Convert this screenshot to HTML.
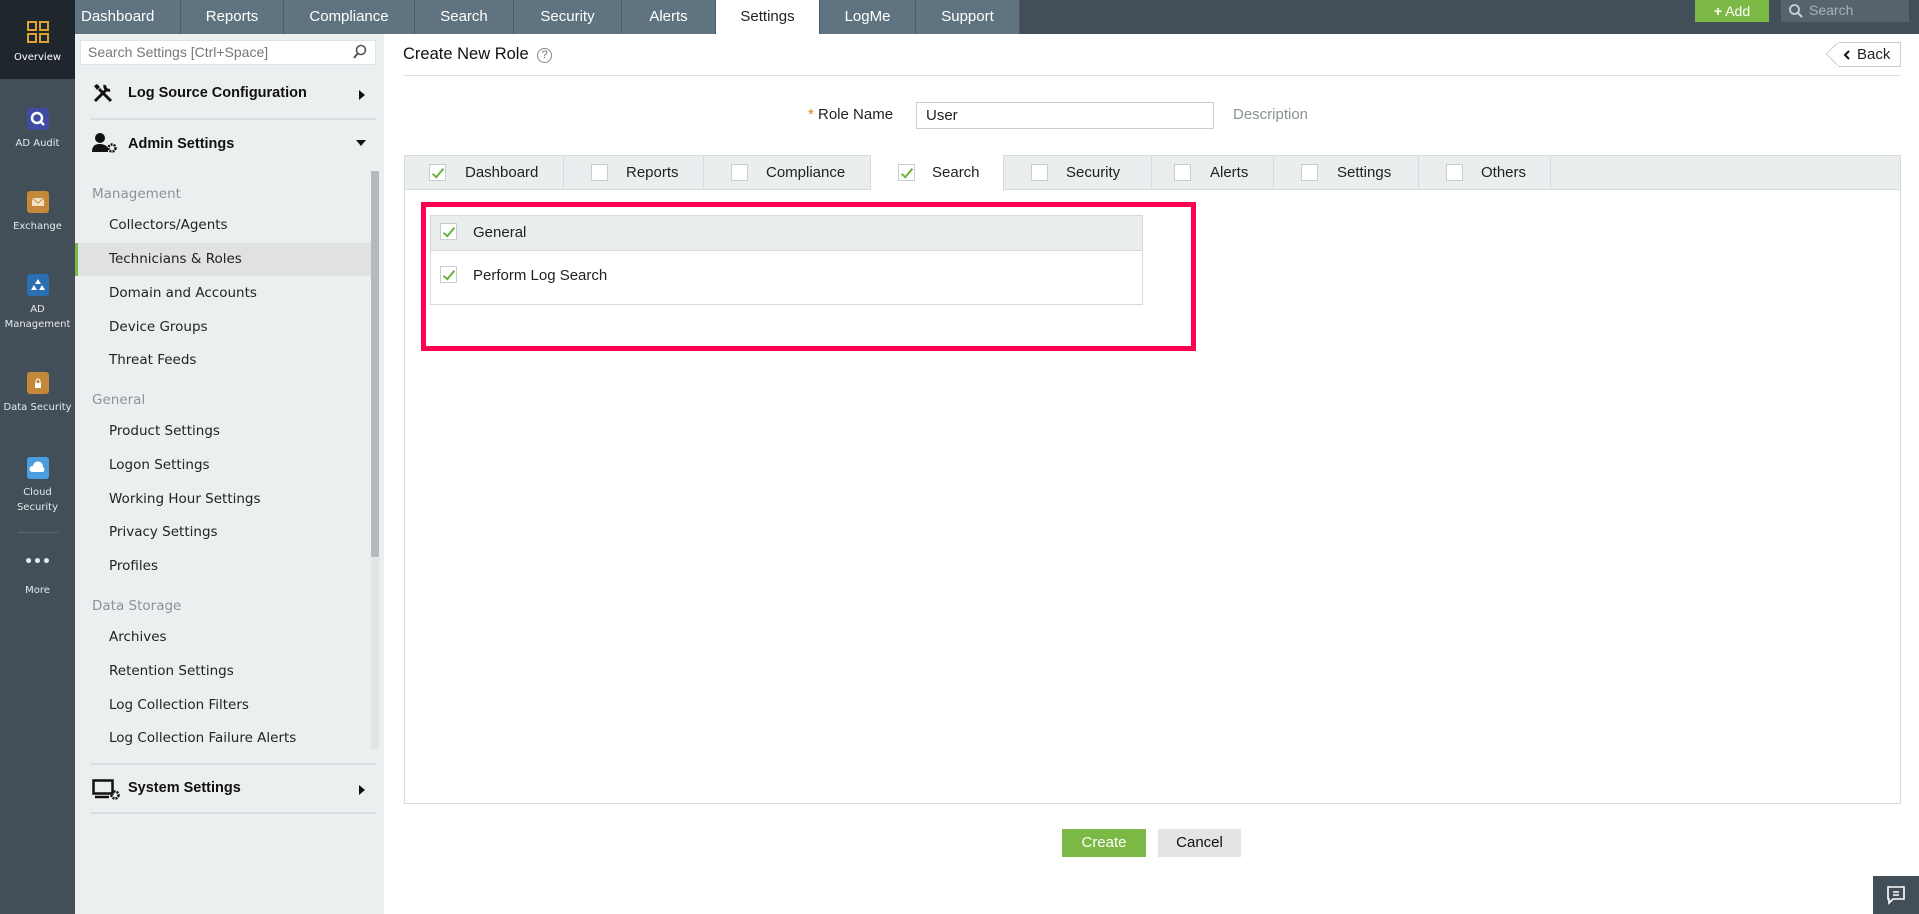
<!DOCTYPE html>
<html><head><meta charset="utf-8"><style>
*{box-sizing:border-box;margin:0;padding:0}
body{width:1919px;height:914px;overflow:hidden;background:#fff;font-family:"Liberation Sans",sans-serif;position:relative;color:#222}
.abs{position:absolute}
#top{left:75px;top:0;width:1844px;height:34px;background:#434f58}
.tab{position:absolute;top:0;height:34px;background:#5f7480;color:#fff;font-size:15px;line-height:33px;text-align:center;border-right:1px solid #4d5d67}
.tab.on{background:#fff;color:#222}
#rail{left:0;top:0;width:75px;height:914px;background:#434f58}
.ri{position:absolute;left:0;width:75px;text-align:center;color:#e6e9eb;font-family:"DejaVu Sans",sans-serif;font-size:10px;line-height:15px}
.ic{width:22px;height:22px;border-radius:3px;margin:0 auto 6px;position:relative}
#side{left:75px;top:34px;width:309px;height:880px;background:#eceff0}
.si{position:absolute;left:109px;font-family:"DejaVu Sans",sans-serif;font-size:13.5px;color:#222}
.sh{position:absolute;left:92px;font-family:"DejaVu Sans",sans-serif;font-size:13.5px;color:#8b9296}
.bh{position:absolute;left:128px;font-size:14.5px;font-weight:bold;color:#111}
.hr{position:absolute;left:91px;width:285px;height:2px;background:#d9dddf}
.ctab{position:absolute;top:155px;height:35px;border-right:1px solid #d6dadc;font-size:15px;line-height:35px;color:#222}
.cb{position:absolute;top:9px;width:17px;height:17px;border:1px solid #c8cdd0;background:#fff}
.cb.k::after{content:"";position:absolute;left:5px;top:1px;width:4px;height:10px;border:solid #6cb33f;border-width:0 2px 2px 0;transform:rotate(40deg)}
</style></head><body>
<div id="rail" class="abs">
 <div class="abs" style="left:0;top:0;width:75px;height:79px;background:#1f262d"></div>
 <div class="ri" style="top:20px;color:#fff"><svg width="24" height="24" viewBox="0 0 24 24" style="display:block;margin:0 auto 6px"><g fill="none" stroke="#e0a22e" stroke-width="2"><rect x="2" y="2" width="8" height="8"/><rect x="14" y="2" width="8" height="8"/><rect x="2" y="14" width="8" height="8"/><rect x="14" y="14" width="8" height="8"/></g></svg>Overview</div>
 <div class="ri" style="top:108px"><div class="ic" style="background:#3f4aa3"><svg width="22" height="22" viewBox="0 0 22 22"><circle cx="10" cy="10" r="5" fill="none" stroke="#fff" stroke-width="2.5"/><path d="M13 13l4 4" stroke="#fff" stroke-width="2.5"/></svg></div>AD Audit</div>
 <div class="ri" style="top:191px"><div class="ic" style="background:#c4883a"><svg width="22" height="22" viewBox="0 0 22 22"><rect x="5" y="7" width="12" height="8" fill="#f4e2c8"/><path d="M5 7l6 5 6-5" stroke="#c4883a" fill="none"/></svg></div>Exchange</div>
 <div class="ri" style="top:274px"><div class="ic" style="background:#2b6fb3"><svg width="22" height="22" viewBox="0 0 22 22"><path d="M11 5l3 5H8zM7 11l3 5H4zM15 11l3 5h-6z" fill="#fff"/></svg></div>AD<br>Management</div>
 <div class="ri" style="top:372px"><div class="ic" style="background:#c4883a"><svg width="22" height="22" viewBox="0 0 22 22"><rect x="8" y="11" width="6" height="5" fill="#fff"/><path d="M9 11V9a2 2 0 0 1 4 0v2" stroke="#fff" fill="none"/></svg></div>Data Security</div>
 <div class="ri" style="top:457px"><div class="ic" style="background:#4a9ee0"><svg width="22" height="22" viewBox="0 0 22 22"><path d="M5 15a3 3 0 0 1 1-6 5 5 0 0 1 10 1 3 3 0 0 1 0 5z" fill="#fff"/></svg></div>Cloud<br>Security</div>
 <div class="abs" style="left:18px;top:532px;width:41px;height:1px;background:#5a6770"></div>
 <div class="ri" style="top:555px;font-size:14px;font-weight:bold">•••</div>
 <div class="ri" style="top:583px">More</div>
</div>
<div id="top" class="abs">
 <div class="abs" style="left:1620px;top:0;width:74px;height:22px;background:#7cb944;color:#fff;font-size:14px;line-height:22px;text-align:center"><b>+</b> Add</div>
 <div class="abs" style="left:1706px;top:0;width:128px;height:22px;background:#56636c;color:#aab3b9;font-size:14px;line-height:20px;padding-left:28px">Search</div>
 <svg class="abs" style="left:1713px;top:3px" width="16" height="16" viewBox="0 0 16 16"><circle cx="6.5" cy="6.5" r="4.5" fill="none" stroke="#c8cfd4" stroke-width="1.8"/><path d="M10 10l4 4" stroke="#c8cfd4" stroke-width="2"/></svg>
</div>
<div class="tab" style="left:75px;width:106px;text-align:left;padding-left:6px">Dashboard</div>
<div class="tab" style="left:181px;width:103px">Reports</div>
<div class="tab" style="left:284px;width:131px">Compliance</div>
<div class="tab" style="left:415px;width:99px">Search</div>
<div class="tab" style="left:514px;width:108px">Security</div>
<div class="tab" style="left:622px;width:94px">Alerts</div>
<div class="tab on" style="left:716px;width:104px">Settings</div>
<div class="tab" style="left:820px;width:96px">LogMe</div>
<div class="tab" style="left:916px;width:104px">Support</div>

<div id="side" class="abs"></div>
<div class="abs" style="left:80px;top:40px;width:296px;height:25px;background:#fff;border:1px solid #e0e3e5;color:#777;font-size:14px;line-height:23px;padding-left:7px">Search Settings [Ctrl+Space]</div>
<svg class="abs" style="left:352px;top:44px" width="16" height="16" viewBox="0 0 16 16"><circle cx="9" cy="6" r="4.5" fill="none" stroke="#555" stroke-width="1.6"/><path d="M6 9l-4 5" stroke="#555" stroke-width="2"/></svg>
<svg class="abs" style="left:92px;top:82px" width="22" height="22" viewBox="0 0 22 22"><path d="M3 19L15 7M7 7L19 19" stroke="#111" stroke-width="3"/><path d="M13 3a4 4 0 0 0 5 5" stroke="#111" stroke-width="3" fill="none"/><path d="M2 4l3-2 3 3-3 3z" fill="#111"/></svg>
<div class="bh" style="top:85px">Log Source Configuration</div>
<div class="abs" style="left:359px;top:90px;border-left:6px solid #111;border-top:5px solid transparent;border-bottom:5px solid transparent"></div>
<div class="hr" style="top:118px"></div>
<svg class="abs" style="left:92px;top:132px" width="26" height="22" viewBox="0 0 26 22"><circle cx="8" cy="6" r="5" fill="#111"/><path d="M0 20c0-7 4-8 8-8s7 2 8 4v4z" fill="#111"/><circle cx="20" cy="16" r="3.5" fill="none" stroke="#111" stroke-width="2.5" stroke-dasharray="2 1"/></svg>
<div class="bh" style="top:136px">Admin Settings</div>
<div class="abs" style="left:356px;top:140px;border-top:6px solid #111;border-left:5px solid transparent;border-right:5px solid transparent"></div>
<div class="abs" style="left:371px;top:171px;width:8px;height:578px;background:#e2e4e5"></div>
<div class="abs" style="left:371px;top:171px;width:8px;height:386px;background:#b5b9bc"></div>
<div class="abs" style="left:75px;top:243px;width:296px;height:33px;background:#dfe1e2;border-left:3px solid #7cb944"></div>
<div class="sh" style="top:186px">Management</div>
<div class="si" style="top:217px">Collectors/Agents</div>
<div class="si" style="top:251px">Technicians &amp; Roles</div>
<div class="si" style="top:285px">Domain and Accounts</div>
<div class="si" style="top:319px">Device Groups</div>
<div class="si" style="top:352px">Threat Feeds</div>
<div class="sh" style="top:392px">General</div>
<div class="si" style="top:423px">Product Settings</div>
<div class="si" style="top:457px">Logon Settings</div>
<div class="si" style="top:491px">Working Hour Settings</div>
<div class="si" style="top:524px">Privacy Settings</div>
<div class="si" style="top:558px">Profiles</div>
<div class="sh" style="top:598px">Data Storage</div>
<div class="si" style="top:629px">Archives</div>
<div class="si" style="top:663px">Retention Settings</div>
<div class="si" style="top:697px">Log Collection Filters</div>
<div class="si" style="top:730px">Log Collection Failure Alerts</div>
<div class="hr" style="top:763px"></div>
<svg class="abs" style="left:92px;top:778px" width="28" height="22" viewBox="0 0 28 22"><rect x="1.5" y="2.5" width="19" height="13" fill="none" stroke="#111" stroke-width="2.5"/><path d="M3 19h14" stroke="#111" stroke-width="2.5"/><circle cx="23" cy="17" r="3.5" fill="none" stroke="#111" stroke-width="2.5" stroke-dasharray="2 1"/></svg>
<div class="bh" style="top:780px">System Settings</div>
<div class="abs" style="left:359px;top:785px;border-left:6px solid #111;border-top:5px solid transparent;border-bottom:5px solid transparent"></div>
<div class="hr" style="top:812px"></div>

<div class="abs" style="left:403px;top:45px;font-size:16.5px;color:#111">Create New Role <span style="display:inline-block;width:15px;height:15px;border:1px solid #888;border-radius:50%;font-size:11px;line-height:13px;text-align:center;color:#777;vertical-align:1px;margin-left:4px">?</span></div>
<div class="abs" style="left:403px;top:75px;width:1498px;height:1px;background:#dcdfe1"></div>
<div class="abs" style="left:1829px;top:46px;width:16px;height:16px;border-left:1px solid #ccc;border-bottom:1px solid #ccc;background:#fff;transform:rotate(45deg)"></div>
<div class="abs" style="left:1838px;top:42px;width:63px;height:25px;border:1px solid #ccc;border-left:none;background:#fff;font-size:15px;line-height:23px;padding-left:19px">Back</div>
<svg class="abs" style="left:1843px;top:50px" width="8" height="10" viewBox="0 0 8 10"><path d="M6 1L2 5l4 4" stroke="#111" stroke-width="2" fill="none"/></svg>

<div class="abs" style="left:808px;top:106px;font-size:15px"><span style="color:#e07b1a">*</span> Role Name</div>
<div class="abs" style="left:916px;top:102px;width:298px;height:27px;border:1px solid #ccc;font-size:15px;line-height:25px;padding-left:9px">User</div>
<div class="abs" style="left:1233px;top:106px;font-size:15px;color:#8b9296">Description</div>

<div class="abs" style="left:404px;top:155px;width:1497px;height:649px;border:1px solid #d6dadc"></div>
<div class="abs" style="left:404px;top:155px;width:1497px;height:35px;background:#ebeeef;border:1px solid #d6dadc"></div>
<div class="ctab" style="left:404px;width:160px"><div class="cb k" style="left:25px"></div><span style="position:absolute;left:61px">Dashboard</span></div>
<div class="ctab" style="left:564px;width:140px"><div class="cb" style="left:27px"></div><span style="position:absolute;left:62px">Reports</span></div>
<div class="ctab" style="left:704px;width:167px"><div class="cb" style="left:27px"></div><span style="position:absolute;left:62px">Compliance</span></div>
<div class="ctab" style="left:871px;width:133px;background:#fff;height:36px"><div class="cb k" style="left:27px"></div><span style="position:absolute;left:61px">Search</span></div>
<div class="ctab" style="left:1004px;width:148px"><div class="cb" style="left:27px"></div><span style="position:absolute;left:62px">Security</span></div>
<div class="ctab" style="left:1152px;width:122px"><div class="cb" style="left:22px"></div><span style="position:absolute;left:58px">Alerts</span></div>
<div class="ctab" style="left:1274px;width:145px"><div class="cb" style="left:27px"></div><span style="position:absolute;left:63px">Settings</span></div>
<div class="ctab" style="left:1419px;width:132px"><div class="cb" style="left:27px"></div><span style="position:absolute;left:62px">Others</span></div>

<div class="abs" style="left:421px;top:202px;width:775px;height:149px;border:5px solid #ff0050"></div>
<div class="abs" style="left:430px;top:215px;width:713px;height:90px;border:1px solid #d6dadc"></div>
<div class="abs" style="left:431px;top:216px;width:711px;height:35px;background:#ebeeef;border-bottom:1px solid #d6dadc"></div>
<div class="cb k abs" style="left:440px;top:223px"></div>
<div class="abs" style="left:473px;top:224px;font-size:15px">General</div>
<div class="cb k abs" style="left:440px;top:266px"></div>
<div class="abs" style="left:473px;top:267px;font-size:15px">Perform Log Search</div>

<div class="abs" style="left:1062px;top:829px;width:84px;height:28px;background:#7cb944;color:#fff;font-size:15px;line-height:28px;text-align:center">Create</div>
<div class="abs" style="left:1158px;top:829px;width:83px;height:28px;background:#e4e4e4;color:#111;font-size:15px;line-height:28px;text-align:center">Cancel</div>
<div class="abs" style="left:1873px;top:876px;width:46px;height:38px;background:#434f58"></div>
<svg class="abs" style="left:1886px;top:885px" width="20" height="20" viewBox="0 0 20 20"><path d="M2 2h16v12H7l-4 4V14H2z" fill="none" stroke="#fff" stroke-width="1.6"/><path d="M7 7h6M7 10h6" stroke="#fff" stroke-width="1.5"/></svg>
</body></html>
